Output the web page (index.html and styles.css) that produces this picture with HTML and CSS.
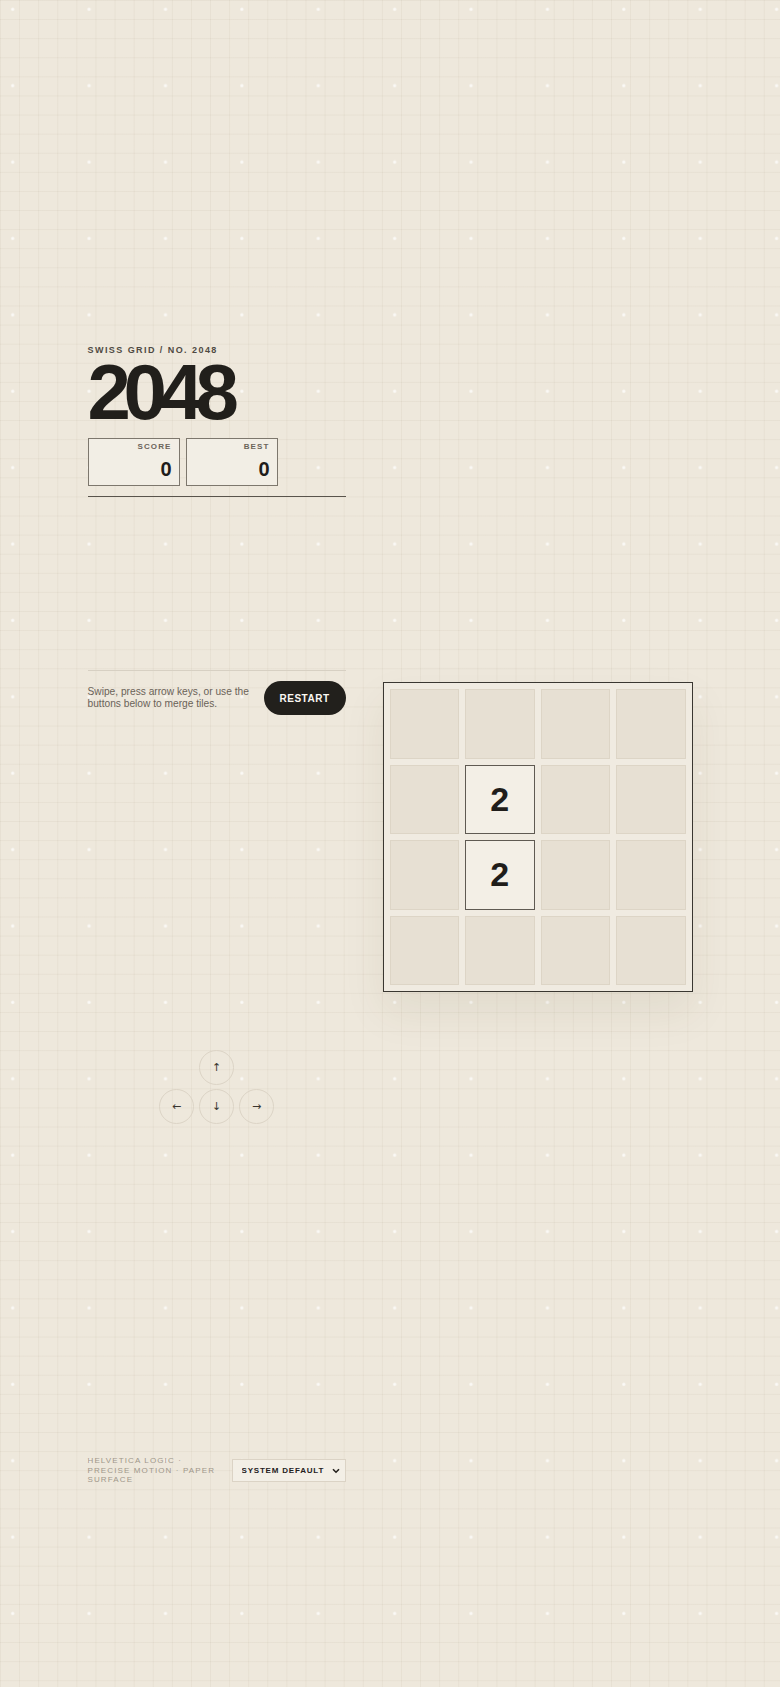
FILE: index.html
```html
<!DOCTYPE html>
<html lang="en">
  <head>
    <meta charset="UTF-8">
    <title>2048 — Swiss Grid</title>
    <link rel="stylesheet" href="styles.css">
  </head>
  <body>
    <main class="game">
      <header class="masthead">
        <p class="eyebrow">Swiss Grid / No. 2048</p>
        <h1 class="title">2048</h1>
        <div class="scores">
          <div class="score-box">
            <span class="score-label">Score</span>
            <span class="score-value">0</span>
          </div>
          <div class="score-box">
            <span class="score-label">Best</span>
            <span class="score-value">0</span>
          </div>
        </div>
      </header>

      <div class="intro">
        <p class="intro-text">Swipe, press arrow keys, or use the buttons below to merge tiles.</p>
        <button type="button" class="restart-btn">Restart</button>
      </div>

      <!-- 4x4 board, tiles sit in their cells -->
      <section class="board">
        <div class="cell"></div>
        <div class="cell"></div>
        <div class="cell"></div>
        <div class="cell"></div>

        <div class="cell"></div>
        <div class="cell tile">2</div>
        <div class="cell"></div>
        <div class="cell"></div>

        <div class="cell"></div>
        <div class="cell tile">2</div>
        <div class="cell"></div>
        <div class="cell"></div>

        <div class="cell"></div>
        <div class="cell"></div>
        <div class="cell"></div>
        <div class="cell"></div>
      </section>

      <div class="pad">
        <button type="button" class="pad-btn pad-up">↑</button>
        <button type="button" class="pad-btn pad-left">←</button>
        <button type="button" class="pad-btn pad-down">↓</button>
        <button type="button" class="pad-btn pad-right">→</button>
      </div>

      <footer class="colophon">
        <p class="colophon-text">Helvetica logic · precise motion · paper surface</p>
        <label class="select-wrap">
          <select class="font-select">
            <option>System default</option>
          </select>
          <svg class="select-chevron" width="8" height="6" viewBox="0 0 8 6" aria-hidden="true">
            <path d="M1 1.2 L4 4.2 L7 1.2" fill="none" stroke="#24211d" stroke-width="1.6"/>
          </svg>
        </label>
      </footer>
    </main>
  </body>
</html>
```

FILE: styles.css
```css
html,
body {
  margin: 0;
}

body {
  min-height: 100vh;
  background-color: #eee8dc;
  /* paper grid: small dots every 4 squares, faint hairlines */
  background-image:
    radial-gradient(circle at 12.7px 9.3px, rgba(255, 255, 255, 0.85) 0, rgba(255, 255, 255, 0.6) 1.2px, transparent 2.2px),
    linear-gradient(90deg, rgba(140, 120, 90, 0.07) 1px, transparent 1px),
    linear-gradient(180deg, rgba(140, 120, 90, 0.07) 1px, transparent 1px);
  background-size: 76.4px 76.4px, 19.1px 19.1px, 19.1px 19.1px;
  font-family: "Liberation Sans", Arial, Helvetica, sans-serif;
  color: #211f1b;
}

.game {
  width: 605px;
  margin: 0 auto;
  padding-top: 344px;
  display: grid;
  grid-template-columns: 258px 310px;
  column-gap: 37px;
  align-items: start;
}

/* header */
.masthead {
  grid-column: 1;
  grid-row: 1;
  padding-bottom: 10px;
  border-bottom: 1px solid #59544c;
}

.eyebrow {
  margin: 0;
  font-size: 9px;
  line-height: 12px;
  font-weight: bold;
  letter-spacing: 0.16em;
  text-transform: uppercase;
  color: #4f4a43;
}

.title {
  margin: 1px 0 0;
  font-size: 78px;
  line-height: 0.9;
  font-weight: bold;
  letter-spacing: -0.095em;
  color: #211f1b;
}

.scores {
  display: flex;
  gap: 6px;
  margin-top: 11px;
}

.score-box {
  box-sizing: border-box;
  width: 92px;
  height: 48px;
  padding: 2.5px 7px 0;
  border: 1.5px solid #7d776d;
  background: #f2eee5;
  display: flex;
  flex-direction: column;
  align-items: flex-end;
}

.score-label {
  font-size: 8px;
  line-height: 10px;
  font-weight: bold;
  letter-spacing: 0.14em;
  text-transform: uppercase;
  color: #6b645a;
}

.score-value {
  margin-top: 6px;
  font-size: 20px;
  line-height: 22px;
  font-weight: bold;
  color: #1f1d1a;
}

/* instructions + restart */
.intro {
  grid-column: 1;
  grid-row: 2;
  margin-top: 173px;
  padding-top: 10px;
  border-top: 1px solid #d7d0c3;
  display: flex;
  align-items: center;
  gap: 10px;
}

.intro-text {
  flex: 1;
  margin: 0;
  font-size: 10.2px;
  line-height: 12.4px;
  color: #6a6258;
}

.restart-btn {
  height: 34px;
  padding: 0 16px;
  border: 0;
  border-radius: 17px;
  background: #22201c;
  color: #fbf8f2;
  font-family: inherit;
  font-size: 10px;
  font-weight: bold;
  letter-spacing: 0.05em;
  text-transform: uppercase;
  cursor: pointer;
}

/* board */
.board {
  grid-column: 2;
  grid-row: 2 / span 2;
  margin-top: 185px;
  box-sizing: border-box;
  width: 310px;
  height: 310px;
  padding: 6px;
  border: 1px solid #3a3731;
  background: #f0ebe1;
  box-shadow: 0 20px 40px rgba(80, 60, 30, 0.08);
  display: grid;
  grid-template-columns: repeat(4, 1fr);
  grid-template-rows: repeat(4, 1fr);
  gap: 6px;
}

.cell {
  box-sizing: border-box;
  background: #e7e0d3;
  border: 1px solid #ddd5c6;
}

.tile {
  background: #f3efe6;
  border-color: #5f5a52;
  display: flex;
  align-items: center;
  justify-content: center;
  font-size: 34px;
  font-weight: bold;
  color: #1f1d1a;
}

/* arrow pad */
.pad {
  grid-column: 1;
  grid-row: 3;
  justify-self: center;
  margin-top: 335px;
  display: grid;
  grid-template-columns: repeat(3, 35px);
  grid-template-rows: repeat(2, 35px);
  column-gap: 5px;
  row-gap: 4px;
}

.pad-btn {
  box-sizing: border-box;
  width: 35px;
  height: 35px;
  padding: 0;
  border: 1px solid #dcd4c6;
  border-radius: 50%;
  background: transparent;
  color: #3a3630;
  font-family: "DejaVu Sans", sans-serif;
  font-size: 11px;
  line-height: 1;
  cursor: pointer;
}

.pad-up { grid-column: 2; grid-row: 1; }
.pad-left { grid-column: 1; grid-row: 2; }
.pad-down { grid-column: 2; grid-row: 2; }
.pad-right { grid-column: 3; grid-row: 2; }

/* footer */
.colophon {
  grid-column: 1;
  grid-row: 4;
  margin-top: 332px;
  display: flex;
  align-items: center;
  gap: 13px;
}

.colophon-text {
  flex: 1;
  margin: 0;
  font-size: 8px;
  line-height: 9.6px;
  letter-spacing: 0.14em;
  text-transform: uppercase;
  color: #a0978a;
}

.select-wrap {
  position: relative;
  display: block;
}

.font-select {
  display: block;
  box-sizing: border-box;
  width: 114px;
  height: 23px;
  padding: 0 0 0 9px;
  border: 1px solid #dbd3c5;
  border-radius: 0;
  background: #f3efe6;
  color: #24211d;
  font-family: inherit;
  font-size: 8px;
  font-weight: bold;
  letter-spacing: 0.1em;
  text-transform: uppercase;
  appearance: none;
  -webkit-appearance: none;
}

.select-chevron {
  position: absolute;
  right: 6px;
  top: 9px;
  pointer-events: none;
}
```
